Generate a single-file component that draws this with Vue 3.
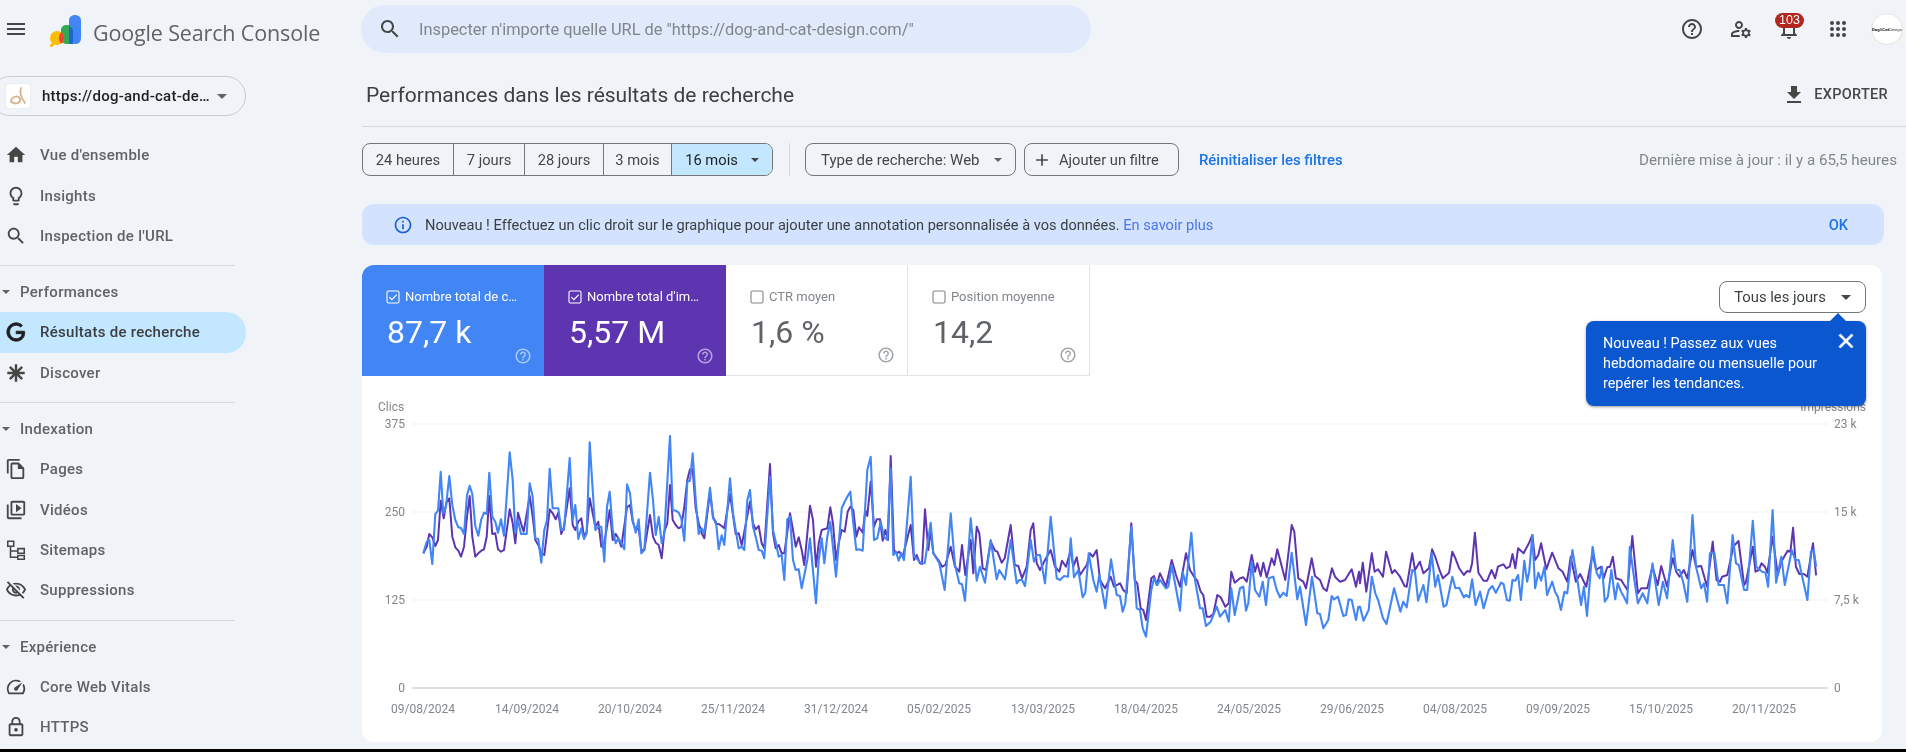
<script setup>
const P = {
  menu: 'M3 18h18v-2H3v2zm0-5h18v-2H3v2zm0-7v2h18V6H3z',
  home: 'M10 20v-6h4v6h5v-8h3L12 3 2 12h3v8z',
  bulb: 'M9 21c0 .55.45 1 1 1h4c.55 0 1-.45 1-1v-1H9v1zm3-19C8.14 2 5 5.14 5 9c0 2.38 1.19 4.47 3 5.74V17c0 .55.45 1 1 1h6c.55 0 1-.45 1-1v-2.26c1.81-1.27 3-3.36 3-5.74 0-3.86-3.14-7-7-7zm2.85 11.1l-.85.6V16h-4v-2.3l-.85-.6C7.8 12.16 7 10.63 7 9c0-2.76 2.24-5 5-5s5 2.24 5 5c0 1.63-.8 3.16-2.15 4.1z',
  search: 'M15.5 14h-.79l-.28-.27C15.41 12.59 16 11.11 16 9.5 16 5.91 13.09 3 9.5 3S3 5.91 3 9.5 5.91 16 9.5 16c1.61 0 3.09-.59 4.23-1.57l.27.28v.79l5 4.99L20.49 19l-4.99-5zm-6 0C7.01 14 5 11.99 5 9.5S7.01 5 9.5 5 14 7.01 14 9.5 11.99 14 9.5 14z',
  g: 'M21.35 11.1h-9.17v2.73h6.51c-.33 3.81-3.5 5.44-6.5 5.44C8.36 19.27 5 16.25 5 12c0-4.1 3.2-7.27 7.2-7.27 3.09 0 4.9 1.97 4.9 1.97L19 4.72S16.56 2 12.1 2C6.42 2 2.03 6.8 2.03 12c0 5.05 4.13 10 10.22 10 5.35 0 9.25-3.67 9.25-9.09 0-1.15-.15-1.81-.15-1.81z',
  pages: 'M16 1H4c-1.1 0-2 .9-2 2v14h2V3h12V1zm-1 4H8c-1.1 0-1.99.9-1.99 2L6 21c0 1.1.89 2 1.99 2H19c1.1 0 2-.9 2-2V11l-6-6zM8 21V7h6v5h5v9H8z',
  video: 'M4 6H2v14c0 1.1.9 2 2 2h14v-2H4V6zm16-4H8c-1.1 0-2 .9-2 2v12c0 1.1.9 2 2 2h12c1.1 0 2-.9 2-2V4c0-1.1-.9-2-2-2zm0 14H8V4h12v12zM12 5.5v9l6-4.5z',
  off: 'M12 6c3.79 0 7.17 2.13 8.82 5.5-.59 1.22-1.42 2.27-2.41 3.12l1.41 1.41c1.39-1.23 2.49-2.77 3.18-4.53C21.27 7.11 17 4 12 4c-1.27 0-2.49.2-3.64.57l1.65 1.65C10.66 6.09 11.32 6 12 6zm-1.07 1.14L13 9.21c.57.25 1.03.71 1.28 1.28l2.07 2.07c.08-.34.14-.7.14-1.07C16.5 9.01 14.48 7 12 7c-.37 0-.72.05-1.07.14zM2.01 3.87l2.68 2.68C3.06 7.83 1.77 9.53 1 11.5 2.73 15.89 7 19 12 19c1.52 0 2.98-.29 4.32-.82l3.42 3.42 1.41-1.41L3.42 2.45 2.01 3.87zm7.5 7.5l2.61 2.61c-.04.01-.08.02-.12.02-1.38 0-2.5-1.12-2.5-2.5 0-.05.01-.08.01-.13zm-3.4-3.4l1.75 1.75c-.23.55-.36 1.15-.36 1.78 0 2.48 2.02 4.5 4.5 4.5.63 0 1.23-.13 1.77-.36l.98.98c-.88.24-1.8.38-2.75.38-3.79 0-7.17-2.13-8.82-5.5.7-1.43 1.72-2.61 2.93-3.53z',
  speed: 'M20.38 8.57l-1.23 1.85a8 8 0 0 1-.22 7.58H5.07A8 8 0 0 1 15.58 6.85l1.85-1.23A10 10 0 0 0 3.35 19a2 2 0 0 0 1.72 1h13.85a2 2 0 0 0 1.74-1 10 10 0 0 0-.27-10.44zm-9.79 6.84a2 2 0 0 0 2.83 0l5.66-8.49-8.49 5.66a2 2 0 0 0 0 2.83z',
  lock: 'M12 17c1.1 0 2-.9 2-2s-.9-2-2-2-2 .9-2 2 .9 2 2 2zm6-9h-1V6c0-2.76-2.24-5-5-5S7 3.24 7 6v2H6c-1.1 0-2 .9-2 2v10c0 1.1.9 2 2 2h12c1.1 0 2-.9 2-2V10c0-1.1-.9-2-2-2zM8.9 6c0-1.71 1.39-3.1 3.1-3.1s3.1 1.39 3.1 3.1v2H8.9V6zM18 20H6V10h12v10z',
  help: 'M11 18h2v-2h-2v2zm1-16C6.48 2 2 6.48 2 12s4.48 10 10 10 10-4.48 10-10S17.52 2 12 2zm0 18c-4.41 0-8-3.59-8-8s3.59-8 8-8 8 3.59 8 8-3.59 8-8 8zm0-14c-2.21 0-4 1.79-4 4h2c0-1.1.9-2 2-2s2 .9 2 2c0 2-3 1.75-3 5h2c0-2.25 3-2.5 3-5 0-2.21-1.79-4-4-4z',
  admin: 'M4 18v-.65c0-.34.16-.66.41-.81C6.1 15.53 8.03 15 10 15c.03 0 .05 0 .08.01.1-.7.3-1.37.59-1.98-.22-.02-.44-.03-.67-.03-2.42 0-4.68.67-6.61 1.82-.88.52-1.39 1.5-1.39 2.53V20h9.26c-.42-.6-.75-1.28-.97-2H4zm6-6c2.21 0 4-1.79 4-4s-1.79-4-4-4-4 1.79-4 4 1.79 4 4 4zm0-6c1.1 0 2 .9 2 2s-.9 2-2 2-2-.9-2-2 .9-2 2-2zm10.75 10c0-.22-.03-.42-.06-.63l1.14-1.01-1-1.73-1.45.49c-.32-.27-.68-.48-1.08-.63L18 11h-2l-.3 1.49c-.4.15-.76.36-1.08.63l-1.45-.49-1 1.73 1.14 1.01c-.03.21-.06.41-.06.63s.03.42.06.63l-1.14 1.01 1 1.73 1.45-.49c.32.27.68.48 1.08.63L16 21h2l.3-1.49c.4-.15.76-.36 1.08-.63l1.45.49 1-1.73-1.14-1.01c.03-.21.06-.41.06-.63zM17 18c-1.1 0-2-.9-2-2s.9-2 2-2 2 .9 2 2-.9 2-2 2z',
  bell: 'M12 22c1.1 0 2-.9 2-2h-4c0 1.1.9 2 2 2zm6-6v-5c0-3.07-1.63-5.64-4.5-6.32V4c0-.83-.67-1.5-1.5-1.5s-1.5.67-1.5 1.5v.68C7.64 5.36 6 7.92 6 11v5l-2 2v1h16v-1l-2-2zm-2 1H8v-6c0-2.48 1.51-4.5 4-4.5s4 2.02 4 4.5v6z',
  download: 'M19 9h-4V3H9v6H5l7 7 7-7zM5 18v2h14v-2H5z',
  info: 'M11 7h2v2h-2zm0 4h2v6h-2zm1-9C6.48 2 2 6.48 2 12s4.48 10 10 10 10-4.48 10-10S17.52 2 12 2zm0 18c-4.41 0-8-3.59-8-8s3.59-8 8-8 8 3.59 8 8-3.59 8-8 8z',
  plus: 'M19 13h-6v6h-2v-6H5v-2h6V5h2v6h6v2z',
  close: 'M19 6.41L17.59 5 12 10.59 6.41 5 5 6.41 10.59 12 5 17.59 6.41 19 12 13.41 17.59 19 19 17.59 13.41 12z',
  star: 'M12 2.5v19M2.5 12h19M5.3 5.3l13.4 13.4M18.7 5.3L5.3 18.7',
  map: 'M3 2.5h6.5v5.5H3zM6 8v12h8M6 13h8M14 10.5h7v5h-7zM14 18h7v4h-7z'
}

const nav = [
  { items: [
    { label: "Vue d'ensemble", d: P.home },
    { label: 'Insights', d: P.bulb },
    { label: "Inspection de l'URL", d: P.search }
  ] },
  { title: 'Performances', items: [
    { label: 'Résultats de recherche', d: P.g, active: true },
    { label: 'Discover', d: P.star, line: 2.7 }
  ] },
  { title: 'Indexation', items: [
    { label: 'Pages', d: P.pages },
    { label: 'Vidéos', d: P.video },
    { label: 'Sitemaps', d: P.map, line: 1.7 },
    { label: 'Suppressions', d: P.off }
  ] },
  { title: 'Expérience', items: [
    { label: 'Core Web Vitals', d: P.speed },
    { label: 'HTTPS', d: P.lock }
  ] }
]

const ranges = ['24 heures', '7 jours', '28 jours', '3 mois']
const metrics = [
  { label: 'Nombre total de c…', value: '87,7 k', cls: 'blue', on: true },
  { label: "Nombre total d'im…", value: '5,57 M', cls: 'purple', on: true },
  { label: 'CTR moyen', value: '1,6 %' },
  { label: 'Position moyenne', value: '14,2' }
]

const leftAxis = [[424, '375'], [512, '250'], [600, '125'], [688, '0']]
const rightAxis = [[424, '23 k'], [512, '15 k'], [600, '7,5 k'], [688, '0']]
const grid = [424, 512, 600]
const dates = [[423, '09/08/2024'], [527, '14/09/2024'], [630, '20/10/2024'], [733, '25/11/2024'], [836, '31/12/2024'], [939, '05/02/2025'], [1043, '13/03/2025'], [1146, '18/04/2025'], [1249, '24/05/2025'], [1352, '29/06/2025'], [1455, '04/08/2025'], [1558, '09/09/2025'], [1661, '15/10/2025'], [1764, '20/11/2025']]

const blueA = '190,490 200,455 208,450 217,522 226,372 234,362 242,245 250,370 258,350 268,258 277,345 286,390 295,412 303,414 312,432 321,315 329,287 337,312 346,408 355,437 364,388 372,368 380,372 388,248 397,380 406,395 414,428 423,388 432,437 449,187 458,270 466,430 474,390 483,432 500,432 509,280 518,320 526,445 535,447 544,518 553,420 561,390 569,236 578,355 595,355 604,420 612,420 629,204 638,390 646,345 655,447 664,415 672,447 680,430 689,157 698,300 706,420 715,410 724,410 733,515 741,350 749,305 758,420 767,460 775,445 784,458 793,478 801,283 810,310 818,390 827,428 836,388 844,490 853,480 870,248 879,330 887,435 896,380 905,460 913,430 930,138 938,360 947,362 956,368 964,385 973,452 982,275 990,272 998,190 1007,330 1016,432 1025,415 1033,430 1050,293 1059,385 1068,395 1076,478 1085,436 1093,465 1110,265 1119,370 1127,420 1136,475 1145,470 1153,480 1162,330 1170,300 1179,410 1187,440 1196,480 1205,482 1213,505 1230,260 1239,420 1247,455 1256,500 1265,495 1273,570 1282,388 1290,380 1299,510 1307,540 1316,538 1325,595 1342,510 1350,445 1368,640 1376,510 1385,445 1393,520 1402,440 1411,395 1428,560 1445,355 1454,335 1463,318 1471,305 1480,400 1489,480 1497,478'
const purpleA = '190,490 200,470 208,432 217,442 226,468 234,450 242,332 251,385 259,338 268,325 277,440 286,472 295,482 303,500 312,470 321,380 329,318 337,440 346,500 355,490 364,482 372,478 380,440 388,318 397,432 406,430 414,478 423,485 432,480 449,358 458,400 466,460 474,368 483,400 491,425 509,318 518,380 526,450 535,465 544,490 553,495 561,430 569,358 578,370 587,388 595,368 604,432 612,410 629,295 638,405 646,420 655,395 664,385 672,440 680,425 689,325 698,370 706,410 715,395 724,470 733,460 749,360 758,450 767,432 775,445 784,470 801,352 810,345 818,395 827,420 836,415 844,480 853,480 870,375 879,440 887,458 896,465 905,505 913,425 922,400 930,285 938,390 947,405 956,415 964,410 973,350 982,270 990,238 998,238 1007,355 1016,400 1025,430 1033,445 1050,305 1059,380 1068,402 1076,402 1085,408 1093,415 1110,312 1119,375 1127,432 1136,430 1145,465 1153,425 1170,335 1179,400 1187,418 1196,408 1205,460 1213,475 1230,222 1239,430 1247,475 1256,465 1265,490 1273,490 1290,370 1299,420 1307,470 1316,442 1325,480 1333,525 1350,347 1359,390 1368,530 1376,460 1385,420 1402,415 1411,352 1419,400 1428,510 1437,455 1445,420 1454,425 1463,365 1471,350 1480,360 1489,440 1497,412'
const blueB = '8,482 22,240 32,200 42,450 52,445 62,395 72,440 82,450 92,235 100,495 108,485 116,512 124,490 132,510 152,260 162,500 170,505 178,515 186,520 194,520 212,398 220,490 238,520 254,600 272,370 285,525 298,580 306,583 315,632 332,385 350,572 360,530 375,578 392,450 410,568 418,540 435,568 452,450 470,580 478,570 486,570 495,588 512,450 522,515 530,495 540,495 555,580 572,380 590,565 600,570 612,558 624,560 632,445 642,562 655,540 668,622 676,608 686,490 700,570 710,605 718,555 736,655 753,508 770,615 780,618 788,665 796,640 814,410 830,655 840,660 848,715 858,740 874,600 882,565 892,585 900,570 918,595 925,590 935,525 960,662 968,545 978,585 994,428 1005,570 1020,655 1028,655 1038,708 1052,695 1070,650 1080,680 1096,660 1106,695 1114,595 1124,675 1140,595 1150,590 1158,662 1165,640 1175,515 1185,600 1198,620 1208,575 1218,645 1226,565 1240,560 1250,600 1260,622 1270,608 1280,618 1295,488 1312,628 1320,590 1338,705 1356,560 1372,670 1380,672 1390,715 1405,690 1415,618 1422,628 1434,620 1450,678 1458,675 1466,628 1475,630 1488,690 1495,650'
const purpleB = '8,428 16,360 22,378 32,275 42,410 50,388 60,388 68,452 76,420 84,450 92,198 102,480 110,490 118,485 128,500 152,405 162,510 170,495 180,520 186,522 195,358 205,480 212,420 220,490 235,510 247,530 256,525 272,470 285,530 298,545 306,465 316,555 332,450 340,550 350,410 358,430 368,535 378,540 392,455 405,482 412,485 425,518 434,505 452,405 464,525 475,528 486,565 500,530 512,420 520,400 530,520 540,540 555,510 572,480 585,530 598,545 606,512 618,530 632,480 640,530 650,502 660,555 680,525 690,490 698,500 710,480 720,570 735,595 752,560 762,590 780,580 790,600 800,610 814,400 824,570 832,580 842,655 850,660 858,690 874,565 882,558 890,585 900,550 918,590 935,510 948,555 960,590 978,490 990,540 1005,565 1012,572 1022,605 1030,615 1040,680 1050,680 1060,672 1072,615 1082,622 1096,650 1106,640 1114,545 1124,578 1140,565 1150,562 1160,575 1175,495 1185,545 1192,520 1202,558 1210,518 1220,562 1235,505 1243,525 1252,478 1276,570 1295,405 1303,425 1315,565 1330,575 1338,595 1355,505 1365,558 1380,570 1390,595 1400,603 1416,535 1425,560 1440,575 1455,570 1475,538 1488,590 1497,545'
const blueC = '0,650 10,692 25,660 34,560 44,610 52,630 66,685 76,702 98,595 116,665 124,635 134,652 150,540 158,545 167,632 182,585 191,637 206,490 216,590 224,555 240,650 248,645 265,560 274,595 285,593 298,622 304,615 314,622 322,568 332,645 345,605 355,655 370,600 380,588 390,608 405,578 412,582 422,630 430,632 438,570 446,572 454,555 462,630 472,512 480,575 486,545 495,435 503,595 512,548 520,572 530,530 537,615 552,575 560,605 568,620 577,660 587,605 595,610 610,480 625,575 635,645 643,590 652,678 668,470 680,550 688,565 695,530 703,635 712,620 722,540 733,628 740,580 750,605 758,620 767,640 775,470 790,585 798,640 812,610 825,640 840,520 858,645 870,575 882,625 898,450 908,540 918,540 928,575 940,635 955,375 965,530 980,595 988,580 997,635 1005,490 1018,490 1030,585 1045,585 1055,640 1070,435 1080,520 1088,525 1103,600 1112,600 1128,392 1138,530 1155,545 1165,548 1172,590 1185,360 1195,578 1210,500 1220,585 1240,480 1250,510 1260,510 1270,560 1285,630 1295,485 1303,480 1310,530'
const purpleC = '0,580 8,518 18,605 34,490 42,545 52,538 66,560 75,485 92,550 100,540 115,560 128,588 134,590 150,490 158,540 172,515 182,550 198,535 207,478 216,500 230,545 238,565 256,548 265,485 274,505 285,535 298,555 308,543 316,545 322,520 330,428 340,548 355,572 365,572 378,540 388,565 396,530 412,523 420,535 430,530 438,492 446,535 454,475 470,490 485,460 495,435 503,510 512,495 520,460 535,538 552,488 570,535 582,545 595,575 605,500 620,575 632,552 650,590 668,490 678,540 692,530 700,565 710,532 718,530 726,500 735,565 750,570 768,600 782,438 798,610 808,595 825,595 840,530 855,585 865,528 882,590 898,505 908,545 918,560 930,540 940,565 955,480 965,530 980,528 997,590 1013,455 1024,570 1034,575 1040,560 1055,555 1072,470 1087,453 1103,585 1108,578 1128,470 1136,545 1145,540 1153,520 1163,530 1170,548 1185,440 1200,555 1210,515 1228,482 1236,485 1244,413 1252,530 1262,552 1275,552 1285,560 1301,460 1310,556'

const toPoints = (src, ox, sx) =>
  src.split(' ').map((pair) => {
    const [x, y] = pair.split(',').map(Number)
    return `${(x / sx + ox).toFixed(1)},${(y / 3 + 390).toFixed(1)}`
  }).join(' ')

const bluePts = [toPoints(blueA, 360, 3), toPoints(blueB, 860, 3), toPoints(blueC, 1360, 2.872)].join(' ')
const purplePts = [toPoints(purpleA, 360, 3), toPoints(purpleB, 860, 3), toPoints(purpleC, 1360, 2.872)].join(' ')
</script>

<template>
  <div class="page">
    <header class="top">
      <div class="brand">
        <svg class="ic burger" viewBox="0 0 24 24"><path :d="P.menu" /></svg>
        <svg class="logo" viewBox="50 15 32 32">
          <rect x="69" y="15" width="12" height="29" rx="5.5" fill="#4285f4" />
          <rect x="61" y="25" width="12" height="19" rx="5" fill="#34a853" />
          <path d="M69 26.5a5 5 0 0 1 4 4.5v13h-4z" fill="#1a67d2" />
          <path d="M51 46l4.5-4.5" stroke="#fbbc04" stroke-width="2.6" stroke-linecap="round" />
          <circle cx="57" cy="38" r="7" fill="#fbbc04" />
          <path d="M61 32.25a7 7 0 0 1 0 11.5 9 9 0 0 1 0-11.5z" fill="#ea4335" />
        </svg>
        <span class="brand-name">Google Search Console</span>
      </div>
      <div class="search">
        <svg class="ic search-ic" viewBox="0 0 24 24"><path :d="P.search" /></svg>
        <span>Inspecter n'importe quelle URL de "https://dog-and-cat-design.com/"</span>
      </div>
      <div class="actions">
        <button class="act"><svg class="ic" viewBox="0 0 24 24"><path :d="P.help" /></svg></button>
        <button class="act"><svg class="ic" viewBox="0 0 24 24"><path :d="P.admin" /></svg></button>
        <button class="act">
          <svg class="ic" viewBox="0 0 24 24"><path :d="P.bell" /></svg>
          <span class="badge">103</span>
        </button>
        <button class="act">
          <svg class="ic" viewBox="0 0 24 24" fill="#444746">
            <template v-for="cy in [6, 12, 18]" :key="cy">
              <circle cx="6" :cy="cy" r="2" /><circle cx="12" :cy="cy" r="2" /><circle cx="18" :cy="cy" r="2" />
            </template>
          </svg>
        </button>
        <div class="avatar"><b>Dog</b>&amp;<b>Cat</b>Design</div>
      </div>
    </header>

    <div class="body">
      <aside class="side">
        <div class="prop">
          <span class="fav">
            <svg viewBox="0 0 24 24"><path d="M15 4c-2 5 1 11 4 15M5 18c0-5 7-8 9-3 1 4-5 6-8 3" fill="none" stroke="#d3b48c" stroke-width="1.8" stroke-linecap="round" /></svg>
          </span>
          <span class="prop-name">https://dog-and-cat-de…</span>
          <span class="caret caret-lg"></span>
        </div>
        <template v-for="(g, i) in nav" :key="i">
          <div v-if="i" class="rule"></div>
          <div v-if="g.title" class="group"><span class="caret"></span>{{ g.title }}</div>
          <div v-for="it in g.items" :key="it.label" class="item" :class="{ active: it.active }">
            <svg v-if="it.line" class="ic nav-ic" viewBox="0 0 24 24"><path :d="it.d" fill="none" stroke="#444746" :stroke-width="it.line" /></svg>
            <svg v-else class="ic nav-ic" viewBox="0 0 24 24"><path :d="it.d" /></svg>
            <span>{{ it.label }}</span>
          </div>
        </template>
      </aside>

      <main class="main">
        <div class="title-row">
          <h1>Performances dans les résultats de recherche</h1>
          <div class="export">
            <svg class="ic" viewBox="0 0 24 24"><path :d="P.download" /></svg>
            EXPORTER
          </div>
        </div>

        <div class="tools">
          <div class="seg">
            <span v-for="r in ranges" :key="r" class="seg-b">{{ r }}</span>
            <span class="seg-b on">16 mois<span class="caret caret-dark"></span></span>
          </div>
          <span class="vr"></span>
          <span class="chip type">Type de recherche: Web<span class="caret"></span></span>
          <span class="chip add"><svg class="ic" viewBox="0 0 24 24"><path :d="P.plus" /></svg>Ajouter un filtre</span>
          <span class="reset">Réinitialiser les filtres</span>
          <span class="updated">Dernière mise à jour : il y a 65,5 heures</span>
        </div>

        <div class="notice">
          <svg class="ic info" viewBox="0 0 24 24"><path :d="P.info" /></svg>
          <span>Nouveau ! Effectuez un clic droit sur le graphique pour ajouter une annotation personnalisée à vos données. <a>En savoir plus</a></span>
          <b class="ok">OK</b>
        </div>

        <section class="card">
          <div class="card-top">
            <div v-for="m in metrics" :key="m.label" class="metric" :class="m.cls">
              <div class="m-label">
                <svg class="check" viewBox="0 0 14 14">
                  <rect x="1" y="1" width="12" height="12" rx="1.5" fill="none" stroke="currentColor" stroke-width="1.1" />
                  <path v-if="m.on" d="M3.4 7.2l2.5 2.5 4.8-5" fill="none" stroke="currentColor" stroke-width="1.2" />
                </svg>
                {{ m.label }}
              </div>
              <div class="m-value">{{ m.value }}</div>
              <svg class="ic m-help" viewBox="0 0 24 24"><path :d="P.help" /></svg>
            </div>
            <div class="freq">Tous les jours<span class="caret caret-dark"></span></div>
          </div>

          <div class="tip">
            <span class="tip-arrow"></span>
            <p>Nouveau ! Passez aux vues hebdomadaire ou mensuelle pour repérer les tendances.</p>
            <svg class="tip-x" viewBox="0 0 24 24"><path :d="P.close" /></svg>
          </div>

          <svg class="chart" viewBox="362 376 1520 366">
            <line v-for="y in grid" :key="y" x1="412" x2="1828" :y1="y" :y2="y" stroke="#f3f4f5" stroke-width="1.5" />
            <line x1="412" x2="1828" y1="688" y2="688" stroke="#bdbdbd" stroke-width="1.2" />
            <text x="378" y="411" class="t">Clics</text>
            <text x="1866" y="411" class="t" text-anchor="end">Impressions</text>
            <text v-for="a in leftAxis" :key="a[1]" x="405" :y="a[0] + 4" class="t" text-anchor="end">{{ a[1] }}</text>
            <text v-for="a in rightAxis" :key="a[1]" x="1834" :y="a[0] + 4" class="t">{{ a[1] }}</text>
            <text v-for="d in dates" :key="d[1]" :x="d[0]" y="713" class="t" text-anchor="middle">{{ d[1] }}</text>
            <polyline :points="purplePts" fill="none" stroke="#5e35b1" stroke-width="2" stroke-linejoin="round" />
            <polyline :points="bluePts" fill="none" stroke="#4285f4" stroke-width="2.1" stroke-linejoin="round" />
          </svg>
        </section>
      </main>
    </div>
    <div class="edge"></div>
  </div>
</template>

<style>
html, body { margin: 0; background: #f0f4f9; }
</style>

<style scoped>
.page { width: 1906px; height: 752px; overflow: hidden; background: #f0f4f9; font-family: Roboto, "Liberation Sans", sans-serif; color: #444746; display: flex; flex-direction: column; filter: blur(.35px); }
.ic { width: 24px; height: 24px; fill: #444746; flex: none; display: block; }
.top { height: 60px; flex: none; display: flex; align-items: flex-start; }
.brand { width: 361px; height: 60px; flex: none; display: flex; align-items: center; }
.burger { margin-left: 4px; margin-right: 22px; margin-top: -2px; }
.logo { width: 32px; height: 32px; flex: none; margin-right: 11px; margin-top: 2px; }
.brand-name { color: #5f6368; letter-spacing: -.15px; white-space: nowrap; font-family: "Open Sans", Roboto, sans-serif; font-size: 21.5px; margin-top: 4px; }
.search { margin-top: 5px; width: 730px; height: 48px; border-radius: 24px; background: #e0eafb; display: flex; align-items: center; font-size: 16.4px; color: #80868b; flex: none; }
.search-ic { margin-left: 17px; margin-right: 17px; }
.actions { margin-left: auto; display: flex; align-items: center; height: 58px; padding-right: 3px; }
.act { width: 48.5px; height: 48px; border: 0; background: none; padding: 0; display: flex; align-items: center; justify-content: center; position: relative; }
.badge { position: absolute; left: 10px; top: 8px; width: 29px; height: 15px; border-radius: 8px; background: #b3261e; color: #fff; font-size: 12.5px; line-height: 15px; text-align: center; font-weight: 500; }
.avatar { width: 32px; height: 32px; margin-left: 9px; border-radius: 50%; background: #fff; box-sizing: border-box; border: 1px solid #e3e3e3; font-size: 4.3px; display: flex; align-items: center; justify-content: center; color: #444; white-space: nowrap; }
.avatar b { color: #111; }

.body { flex: 1; display: flex; min-height: 0; }
.side { width: 362px; flex: none; overflow: hidden; }
.prop { width: 256px; height: 40px; box-sizing: border-box; margin: 16px 0 19px -10px; padding-left: 15px; border: 1px solid #c7cacd; border-radius: 20px; display: flex; align-items: center; }
.fav { width: 24px; height: 24px; background: #fff; border-radius: 2px; box-shadow: 0 0 1px #bbb; flex: none; }
.fav svg { width: 24px; height: 24px; display: block; }
.prop-name { font-size: 15px; font-weight: 500; color: #1f1f1f; margin-left: 12px; white-space: nowrap; width: 172px; letter-spacing: .25px; }
.caret { display: inline-block; width: 0; height: 0; border-left: 5px solid transparent; border-right: 5px solid transparent; border-top: 5px solid #5f6368; flex: none; }
.caret-lg { margin-left: 3px; }
.caret-dark { border-top-color: #444746; }
.rule { width: 235px; height: 1px; background: #d5d9dc; margin: 9px 0 6px; }
.group { height: 40px; display: flex; align-items: center; font-size: 15px; font-weight: 500; color: #5f6368; width: 246px; letter-spacing: .28px; }
.group .caret { margin: 0 10px 0 2px; border-left-width: 4.5px; border-right-width: 4.5px; border-top-width: 4.5px; }
.item { width: 246px; height: 40.4px; box-sizing: border-box; display: flex; align-items: center; font-size: 15px; font-weight: 500; color: #5f6368; padding-left: 5px; letter-spacing: .28px; }
.nav-ic { width: 22px; height: 22px; margin-right: 13px; }
.item.active { background: #c2e7ff; border-radius: 0 20px 20px 0; color: #3c4043; }
.item.active .nav-ic { fill: #1f1f1f; stroke: #1f1f1f; stroke-width: .9px; }

.main { flex: 1; min-width: 0; }
.title-row { height: 67px; box-sizing: border-box; border-bottom: 1.5px solid #d5d8db; display: flex; align-items: center; padding: 3px 18px 0 4px; }
h1 { margin: 0; font-size: 21px; font-weight: 400; color: #3c4043; white-space: nowrap; }
.export { margin-left: auto; display: flex; align-items: center; gap: 8px; font-size: 14.5px; font-weight: 500; color: #444746; letter-spacing: .3px; }
.tools { margin-top: 16px; height: 33px; display: flex; align-items: center; padding-right: 9px; font-size: 14.7px; }
.seg { display: flex; height: 33px; box-sizing: border-box; border: 1px solid #747775; border-radius: 8px; overflow: hidden; width: 411px; flex: none; }
.seg-b { display: flex; align-items: center; justify-content: center; border-right: 1px solid #747775; white-space: nowrap; flex: none; box-sizing: border-box; }
.seg-b:nth-child(1) { width: 91px; }
.seg-b:nth-child(2) { width: 71px; }
.seg-b:nth-child(3) { width: 79px; }
.seg-b:nth-child(4) { width: 68px; }
.seg-b.on { background: #c2e7ff; flex: 1; border-right: 0; color: #1f1f1f; }
.seg-b .caret { margin-left: 13px; border-left-width: 4px; border-right-width: 4px; border-top-width: 4px; }
.vr { width: 1px; height: 33px; background: #d5d8db; margin: 0 15px 0 16px; flex: none; }
.chip { height: 33px; box-sizing: border-box; border: 1px solid #747775; border-radius: 8px; display: flex; align-items: center; white-space: nowrap; flex: none; }
.type { width: 211px; padding: 0 13px 0 15px; font-size: 15px; justify-content: space-between; }
.type .caret { border-left-width: 4px; border-right-width: 4px; border-top-width: 4px; }
.add { width: 155px; margin-left: 8px; padding-left: 7px; gap: 7px; }
.add .ic { width: 20px; height: 20px; }
.reset { margin-left: 20px; color: #1a73e8; font-weight: 500; white-space: nowrap; font-size: 14.9px; }
.updated { margin-left: auto; color: #80868b; white-space: nowrap; font-size: 15.2px; }
.notice { margin: 28px 22px 0 0; height: 41px; background: #d3e3fd; border-radius: 12px; display: flex; align-items: center; font-size: 14.6px; color: #3c4043; padding-left: 31px; }
.notice a { color: #4d74e8; }
.info { width: 20px; height: 20px; fill: #1a5fd0; margin-right: 12px; }
.ok { margin-left: auto; margin-right: 36px; color: #1a73e8; font-weight: 500; }
.card { margin: 20px 24px 0 0; height: 477px; background: #fff; border-radius: 12px; position: relative; overflow: hidden; }
.card-top { display: flex; height: 111px; align-items: flex-start; }
.metric { width: 182px; height: 111px; box-sizing: border-box; position: relative; padding: 25px 0 0 24px; color: #80868b; border-right: 1px solid #e0e2e4; border-bottom: 1px solid #e0e2e4; flex: none; }
.metric.blue { background: #4285f4; color: #fff; border: 0; }
.metric.purple { background: #5e35b1; color: #fff; border: 0; }
.m-label { display: flex; align-items: center; gap: 5px; font-size: 13px; line-height: 14px; white-space: nowrap; }
.check { width: 14px; height: 14px; flex: none; }
.m-value { font-size: 32px; line-height: 38px; margin-top: 9px; margin-left: 1px; color: inherit; }
.metric:not(.blue):not(.purple) .m-value { color: #5f6368; }
.m-help { position: absolute; right: 12px; bottom: 11px; width: 18px; height: 18px; fill: currentColor; opacity: .75; }
.blue .m-help, .purple .m-help { opacity: .55; }
.freq { margin: 16px 16px 0 auto; width: 147px; height: 32px; box-sizing: border-box; border: 1px solid #747775; border-radius: 8px; display: flex; align-items: center; justify-content: center; font-size: 14.8px; color: #3c4043; }
.freq .caret { margin-left: 15px; }
.tip { position: absolute; left: 1224px; top: 56px; width: 280px; height: 85px; box-sizing: border-box; background: #0b57d0; border-radius: 8px; color: #fff; padding: 13px 40px 0 17px; box-shadow: 0 1px 3px rgba(0, 0, 0, .4); z-index: 2; }
.tip p { margin: 0; font-size: 14.4px; line-height: 20px; width: 226px; }
.tip-arrow { position: absolute; right: 20px; top: -8px; width: 0; height: 0; border-left: 8px solid transparent; border-right: 8px solid transparent; border-bottom: 8px solid #0b57d0; }
.tip-x { position: absolute; right: 8px; top: 8px; width: 24px; height: 24px; fill: #fff; stroke: #fff; stroke-width: .8px; }
.chart { display: block; width: 1520px; height: 366px; }
.t { font-size: 12px; fill: #80868b; font-family: Roboto, sans-serif; }
.edge { height: 3px; background: #000; flex: none; }
</style>
